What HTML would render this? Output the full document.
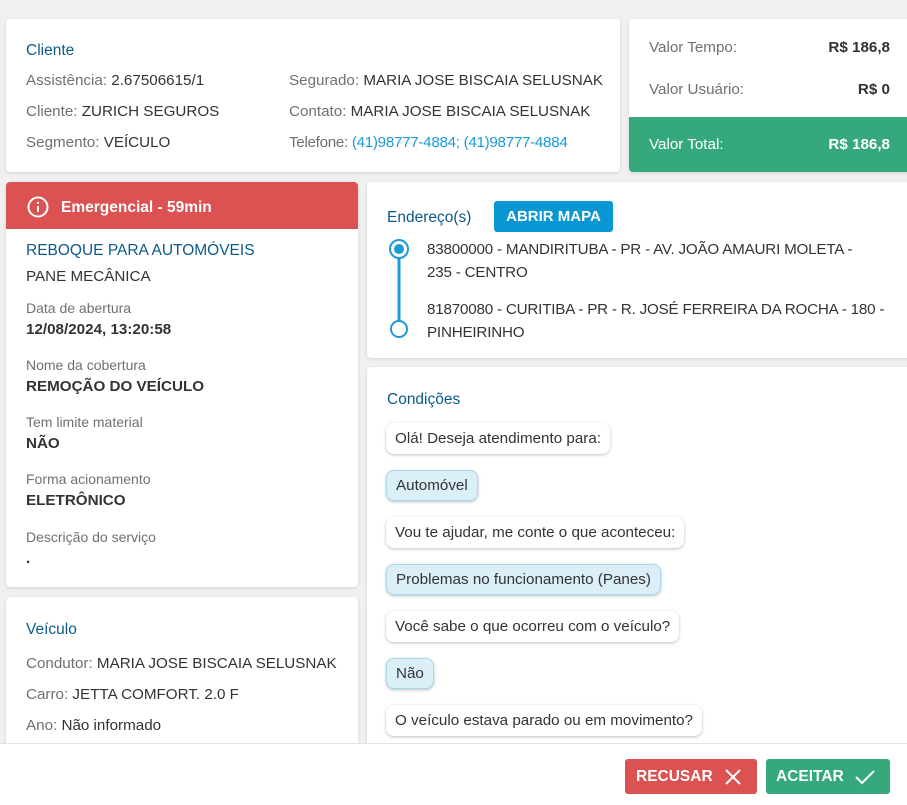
<!DOCTYPE html>
<html><head><meta charset="utf-8"><style>
*{box-sizing:border-box;margin:0;padding:0}
body{width:907px;height:805px;background:#f0f0f0;font-family:"Liberation Sans",sans-serif;font-size:15.2px;color:#333;position:relative;overflow:hidden}
.card{position:absolute;background:#fff;border-radius:4px;box-shadow:0 1px 3px rgba(0,0,0,.12)}
.a{position:absolute;white-space:nowrap}
.t{color:#0d5a8a;font-size:15.5px}
.l{color:#707070}
.b{font-weight:bold}
.bub{position:absolute;left:386px;height:31px;line-height:31px;padding:0 9px;background:#fff;border-radius:8px;box-shadow:0 1px 3px rgba(0,0,0,.25);white-space:nowrap}
.bub.u{background:#dbeff9;border:1px solid #a8d8ee;line-height:29px}
.lab{color:#707070;font-size:14px}
.val{font-weight:bold;font-size:15.2px}
</style></head><body>

<div class="card" style="left:6px;top:19px;width:614px;height:153px"></div>
<div class="a t" style="left:26px;top:42px">Cliente</div>
<div class="a" style="left:26px;top:72px"><span class="l">Assistência:</span> 2.67506615/1</div>
<div class="a" style="left:26px;top:103px"><span class="l">Cliente:</span> ZURICH SEGUROS</div>
<div class="a" style="left:26px;top:134px"><span class="l">Segmento:</span> VEÍCULO</div>
<div class="a" style="left:289px;top:72px"><span class="l">Segurado:</span> MARIA JOSE BISCAIA SELUSNAK</div>
<div class="a" style="left:289px;top:103px"><span class="l">Contato:</span> MARIA JOSE BISCAIA SELUSNAK</div>
<div class="a" style="left:289px;top:134px;letter-spacing:-.3px"><span class="l">Telefone:</span> <span style="color:#1a9bd7">(41)98777-4884; (41)98777-4884</span></div>

<div class="card" style="left:629px;top:19px;width:290px;height:153px;overflow:hidden">
<div style="position:absolute;left:0;top:98px;width:100%;height:55px;background:#35a87c"></div></div>
<div class="a l" style="left:649px;top:39px">Valor Tempo:</div>
<div class="a b" style="right:17px;top:39px">R$ 186,8</div>
<div class="a l" style="left:649px;top:81px">Valor Usuário:</div>
<div class="a b" style="right:17px;top:81px">R$ 0</div>
<div class="a" style="left:649px;top:136px;color:#fff">Valor Total:</div>
<div class="a b" style="right:17px;top:136px;color:#fff">R$ 186,8</div>

<div class="card" style="left:6px;top:182px;width:352px;height:405px;overflow:hidden">
<div style="height:47px;background:#dc5151"></div></div>
<svg class="a" style="left:27px;top:196px" width="22" height="22" viewBox="0 0 22 22"><circle cx="11" cy="11" r="9.5" fill="none" stroke="#fff" stroke-width="2"/><rect x="10" y="10" width="2" height="6" fill="#fff"/><circle cx="11" cy="7" r="1.2" fill="#fff"/></svg>
<div class="a b" style="left:61px;top:199px;color:#fff;font-size:15.5px">Emergencial - 59min</div>
<div class="a t" style="left:26px;top:242px">REBOQUE PARA AUTOMÓVEIS</div>
<div class="a" style="left:26px;top:268px">PANE MECÂNICA</div>
<div class="a lab" style="left:26px;top:300px">Data de abertura</div>
<div class="a val" style="left:26px;top:321px">12/08/2024, 13:20:58</div>
<div class="a lab" style="left:26px;top:357px">Nome da cobertura</div>
<div class="a val" style="left:26px;top:378px">REMOÇÃO DO VEÍCULO</div>
<div class="a lab" style="left:26px;top:414px">Tem limite material</div>
<div class="a val" style="left:26px;top:435px">NÃO</div>
<div class="a lab" style="left:26px;top:471px">Forma acionamento</div>
<div class="a val" style="left:26px;top:492px">ELETRÔNICO</div>
<div class="a lab" style="left:26px;top:529px">Descrição do serviço</div>
<div class="a val" style="left:26px;top:550px">.</div>

<div class="card" style="left:6px;top:597px;width:352px;height:200px"></div>
<div class="a t" style="left:26px;top:621px">Veículo</div>
<div class="a" style="left:26px;top:655px"><span class="l">Condutor:</span> MARIA JOSE BISCAIA SELUSNAK</div>
<div class="a" style="left:26px;top:686px"><span class="l">Carro:</span> JETTA COMFORT. 2.0 F</div>
<div class="a" style="left:26px;top:717px"><span class="l">Ano:</span> Não informado</div>

<div class="card" style="left:367px;top:182px;width:550px;height:176px"></div>
<div class="a t" style="left:387px;top:209px">Endereço(s)</div>
<div class="a b" style="left:494px;top:201px;width:119px;height:31px;line-height:31px;background:#0897d3;color:#fff;border-radius:3px;text-align:center;font-size:15px">ABRIR MAPA</div>
<svg class="a" style="left:387px;top:237px" width="24" height="104" viewBox="0 0 24 104"><line x1="12" y1="20" x2="12" y2="84" stroke="#1a9bd7" stroke-width="3"/><circle cx="12" cy="12" r="9" fill="#fff" stroke="#1a9bd7" stroke-width="2"/><circle cx="12" cy="12" r="5" fill="#1a9bd7"/><circle cx="12" cy="92" r="8" fill="#fff" stroke="#1a9bd7" stroke-width="2"/></svg>
<div class="a" style="left:427px;top:238px;line-height:23px;letter-spacing:-.2px">83800000 - MANDIRITUBA - PR - AV. JOÃO AMAURI MOLETA -<br>235 - CENTRO</div>
<div class="a" style="left:427px;top:298px;line-height:23px;letter-spacing:-.2px">81870080 - CURITIBA - PR - R. JOSÉ FERREIRA DA ROCHA - 180 -<br>PINHEIRINHO</div>

<div class="card" style="left:367px;top:367px;width:550px;height:430px"></div>
<div class="a t" style="left:387px;top:391px">Condições</div>
<div class="bub" style="top:423px">Olá! Deseja atendimento para:</div>
<div class="bub u" style="top:470px">Automóvel</div>
<div class="bub" style="top:517px">Vou te ajudar, me conte o que aconteceu:</div>
<div class="bub u" style="top:564px">Problemas no funcionamento (Panes)</div>
<div class="bub" style="top:611px">Você sabe o que ocorreu com o veículo?</div>
<div class="bub u" style="top:658px">Não</div>
<div class="bub" style="top:705px">O veículo estava parado ou em movimento?</div>

<div style="position:absolute;left:0;top:743px;width:907px;height:62px;background:#fff;border-top:1px solid #e2e2e2"></div>
<div class="a b" style="left:625px;top:759px;width:132px;height:35px;background:#dc5151;border-radius:3px;color:#fff;line-height:36px;padding-left:11px;font-size:15.5px">RECUSAR
<svg style="position:absolute;left:100px;top:10px" width="16" height="16" viewBox="0 0 16 16"><path d="M1 1L15 15M15 1L1 15" stroke="#fff" stroke-width="2"/></svg></div>
<div class="a b" style="left:766px;top:759px;width:124px;height:35px;background:#35a87c;border-radius:3px;color:#fff;line-height:36px;padding-left:10px;font-size:15.5px">ACEITAR
<svg style="position:absolute;left:89px;top:10px" width="20" height="16" viewBox="0 0 20 16"><path d="M1 8L7 14L19 2" fill="none" stroke="#fff" stroke-width="2"/></svg></div>
</body></html>
